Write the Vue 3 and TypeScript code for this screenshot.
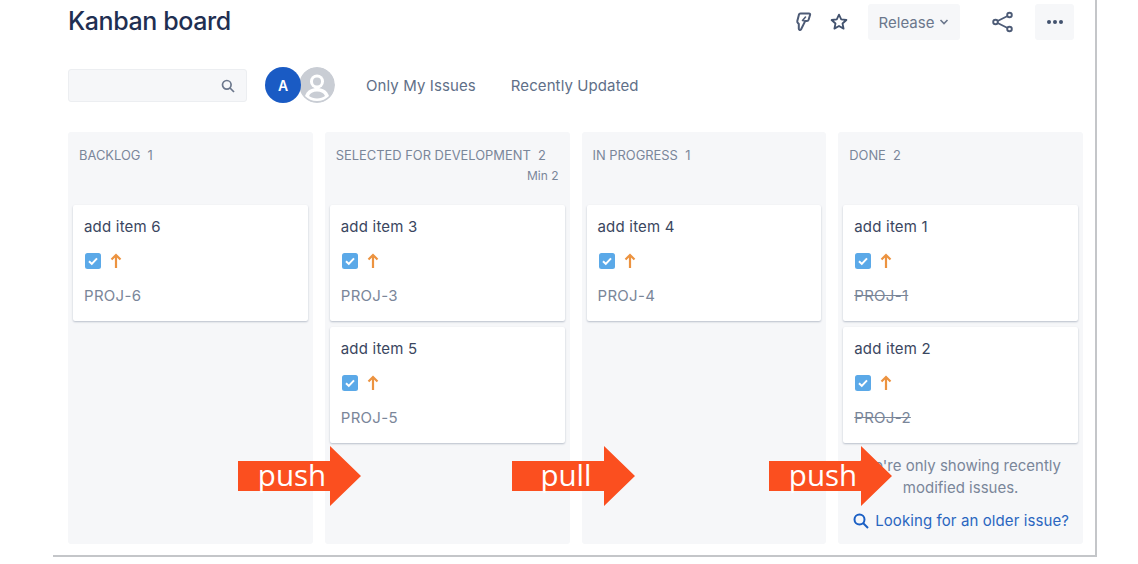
<template>
  <div class="frame">
    <header class="top">
      <h1 class="title">Kanban board</h1>
      <div class="actions">
        <svg class="ico bolt" width="18" height="22" viewBox="0 0 18 22" fill="none" stroke="#4d5b76" stroke-width="2" stroke-linejoin="round" stroke-linecap="round">
          <path d="M5.500 2.500h8.500c.9 0 1.300.6 1.100 1.300l-1.500 5c-.3 1-1 1.400-2 1.300l-1.300-.2L6 18.500c-.7 1-2.200.5-2.200-.7V13L2.800 11.800c-.5-.5-.6-1-.5-1.700L4 3.600c.1-.7.800-1.100 1.500-1.100z" />
          <path d="M10.500 6L7.500 9.500l2.500.5" stroke-width="1.600" />
        </svg>
        <svg class="ico star" width="20" height="20" viewBox="0 0 20 20" fill="none" stroke="#42526e" stroke-width="1.800" stroke-linejoin="round">
          <path d="M10 2.600l2.200 4.800 5.200.6-3.900 3.500 1.100 5.100-4.600-2.600-4.600 2.600 1.100-5.100L2.600 8l5.200-.6z" />
        </svg>
        <button class="btn release">
          Release
          <svg width="10" height="8" viewBox="0 0 10 8" fill="none" stroke="#6b778c" stroke-width="1.600"><path d="M1.500 2l3.500 3.500L8.500 2" /></svg>
        </button>
        <svg class="ico share" width="24" height="24" viewBox="0 0 24 24" fill="none" stroke="#4d5b76" stroke-width="1.900">
          <circle cx="18.500" cy="5" r="2.300" />
          <circle cx="18.500" cy="19" r="2.300" />
          <circle cx="4.500" cy="12" r="2.300" />
          <path d="M6.600 11l10-5M6.600 13l10 5" />
        </svg>
        <button class="btn more"><i></i><i></i><i></i></button>
      </div>
    </header>

    <div class="toolbar">
      <div class="search">
        <svg width="16" height="16" viewBox="0 0 16 16" fill="none" stroke="#6b778c" stroke-width="1.700">
          <circle cx="6.800" cy="6.800" r="4.300" /><path d="M10 10l4 4" />
        </svg>
      </div>
      <div class="avatars">
        <span class="avatar a">A</span>
        <svg class="avatar b" width="36" height="36" viewBox="0 0 36 36">
          <circle cx="18" cy="18" r="18" fill="#c9cdd4" />
          <circle cx="18" cy="14.500" r="7" fill="#fff" />
          <path d="M6 29c2-6 7-8 12-8s10 2 12 8c-3 3-7 5-12 5s-9-2-12-5z" fill="#fff" />
          <circle cx="18" cy="14.500" r="4" fill="#c9cdd4" />
          <path d="M10 29c1-3 4-4.500 8-4.500s7 1.500 8 4.500c-2 1.500-5 2.500-8 2.500s-6-1-8-2.500z" fill="#c9cdd4" />
        </svg>
      </div>
      <a class="filter first">Only My Issues</a>
      <a class="filter">Recently Updated</a>
    </div>

    <section class="board">
      <div v-for="col in columns" :key="col.name" class="col">
        <div class="col-head">
          <span>{{ col.name }}&nbsp; {{ col.cards.length }}</span>
          <small v-if="col.min">Min {{ col.min }}</small>
        </div>
        <div class="cards">
          <article v-for="card in col.cards" :key="card.key" class="card">
            <div class="card-title">{{ card.title }}</div>
            <div class="card-icons">
              <svg width="16" height="16" viewBox="0 0 16 16">
                <rect width="16" height="16" rx="2.500" fill="#5ba9e8" />
                <path d="M4 8.200l2.800 2.700L12 5.400" fill="none" stroke="#fff" stroke-width="2" />
              </svg>
              <svg width="14" height="16" viewBox="0 0 14 16" fill="none" stroke="#ec9340" stroke-width="2.200">
                <path d="M7 15V2M2.500 6.500L7 2l4.500 4.500" />
              </svg>
            </div>
            <div class="card-key" :class="{ done: col.done }">{{ card.key }}</div>
          </article>
        </div>
        <div v-if="col.done" class="older">
          <p>We're only showing recently modified issues.</p>
          <a>
            <svg width="18" height="18" viewBox="0 0 18 18" fill="none" stroke="#1a5fc4" stroke-width="2">
              <circle cx="7.500" cy="7.500" r="5" /><path d="M11 11l5 5" />
            </svg>
            Looking for an older issue?
          </a>
        </div>
      </div>
    </section>
  </div>

  <div v-for="arrow in arrows" :key="arrow.x" class="arrow" :style="{ left: arrow.x + 'px' }">
    <svg width="123" height="60" viewBox="0 0 123 60">
      <path d="M0 15h92V0l31 30-31 30V45H0z" fill="#fb4f1f" />
    </svg>
    <span>{{ arrow.label }}</span>
  </div>
</template>

<script setup lang="ts">
interface Card {
  key: string;
  title: string;
}

interface Column {
  name: string;
  min?: number;
  done?: boolean;
  cards: Card[];
}

const columns: Column[] = [
  { name: 'BACKLOG', cards: [{ key: 'PROJ-6', title: 'add item 6' }] },
  {
    name: 'SELECTED FOR DEVELOPMENT',
    min: 2,
    cards: [
      { key: 'PROJ-3', title: 'add item 3' },
      { key: 'PROJ-5', title: 'add item 5' },
    ],
  },
  { name: 'IN PROGRESS', cards: [{ key: 'PROJ-4', title: 'add item 4' }] },
  {
    name: 'DONE',
    done: true,
    cards: [
      { key: 'PROJ-1', title: 'add item 1' },
      { key: 'PROJ-2', title: 'add item 2' },
    ],
  },
];

const arrows = [
  { x: 238, label: 'push' },
  { x: 512, label: 'pull' },
  { x: 769, label: 'push' },
];
</script>

<style>
html,
body {
  margin: 0;
  background: #fff;
  overflow: hidden;
}
</style>

<style scoped>
.frame {
  box-sizing: border-box;
  width: 1044px;
  height: 557px;
  margin-left: 53px;
  padding: 0 12px 0 15px;
  border-right: 2px solid #c4c6c9;
  border-bottom: 2px solid #c4c6c9;
  font-family: Inter, "Liberation Sans", sans-serif;
  color: #172b4d;
}

.top {
  display: flex;
  align-items: center;
  justify-content: space-between;
  height: 44px;
}

.title {
  margin: 0 0 2px;
  font-size: 25px;
  font-weight: 500;
  letter-spacing: -0.4px;
  color: #1f2f52;
}

.actions {
  display: flex;
  align-items: center;
  padding-right: 9px;
}

.ico {
  display: block;
}

.star {
  margin-left: 16px;
}

.btn {
  display: flex;
  align-items: center;
  justify-content: center;
  height: 36px;
  border: 0;
  border-radius: 3px;
  background: #f6f7f9;
  font: inherit;
}

.release {
  gap: 5px;
  width: 92px;
  margin-left: 19px;
  font-size: 15px;
  color: #6b778c;
}

.share {
  margin-left: 31px;
}

.more {
  gap: 2px;
  width: 39px;
  margin-left: 20px;
}

.more i {
  width: 4px;
  height: 4px;
  border-radius: 50%;
  background: #42526e;
}

.toolbar {
  display: flex;
  align-items: center;
  height: 36px;
  margin-top: 23px;
}

.search {
  box-sizing: border-box;
  display: flex;
  align-items: center;
  justify-content: flex-end;
  width: 179px;
  height: 33px;
  margin-top: 1px;
  padding-right: 10px;
  border: 1px solid #eceef1;
  border-radius: 3px;
  background: #f6f7f9;
}

.avatars {
  display: flex;
  margin-left: 18px;
}

.avatar {
  display: block;
  width: 36px;
  height: 36px;
  border-radius: 50%;
}

.avatar.a {
  position: relative;
  z-index: 1;
  display: flex;
  align-items: center;
  justify-content: center;
  background: #1a5bc4;
  color: #fff;
  font-size: 14px;
  font-weight: 600;
}

.avatar.b {
  margin-left: -2px;
}

.filter {
  margin-left: 35px;
  font-size: 15px;
  letter-spacing: 0.1px;
  color: #5f6f88;
}

.filter.first {
  margin-left: 31px;
}

.board {
  display: flex;
  gap: 12px;
  margin-top: 29px;
}

.col {
  box-sizing: border-box;
  display: flex;
  flex-direction: column;
  width: 245px;
  height: 412px;
  padding: 0 5px;
  border-radius: 3px;
  background: #f6f7f9;
}

.col-head {
  display: flex;
  flex-direction: column;
  height: 73px;
  padding: 16px 6px 0;
  box-sizing: border-box;
  font-size: 12.9px;
  line-height: 16px;
  color: #7a8699;
}

.col-head small {
  margin-top: 5px;
  font-size: 12px;
  line-height: 14px;
  text-align: right;
}

.cards {
  display: flex;
  flex-direction: column;
  gap: 6px;
}

.card {
  box-sizing: border-box;
  height: 116px;
  padding: 13px 11px 0;
  border-radius: 2px;
  background: #fff;
  box-shadow: 0 1px 2px rgba(9, 30, 66, 0.25);
}

.card-title {
  font-size: 15px;
  letter-spacing: 0.2px;
  line-height: 18px;
  color: #3a4660;
}

.card-icons {
  display: flex;
  align-items: center;
  gap: 8px;
  height: 16px;
  margin-top: 17px;
  margin-left: 1px;
}

.card-key {
  margin-top: 18px;
  font-size: 15px;
  letter-spacing: 0.3px;
  line-height: 18px;
  color: #7a8699;
}

.card-key.done {
  text-decoration: line-through;
}

.older {
  margin-top: 12px;
  text-align: center;
  font-size: 15px;
  line-height: 22px;
  color: #7a8699;
}

.older p {
  margin: 0 0 11px;
  padding: 0 10px;
}

.older a {
  display: flex;
  align-items: center;
  justify-content: center;
  gap: 5px;
  font-size: 15px;
  letter-spacing: 0.1px;
  color: #2a66c0;
}

.arrow {
  position: absolute;
  top: 446px;
  width: 123px;
  height: 60px;
}

.arrow svg {
  display: block;
}

.arrow span {
  position: absolute;
  top: 9px;
  left: 0;
  width: 108px;
  text-align: center;
  font-family: "Open Sans", sans-serif;
  font-size: 29.5px;
  line-height: 40px;
  color: #fff;
}
</style>
